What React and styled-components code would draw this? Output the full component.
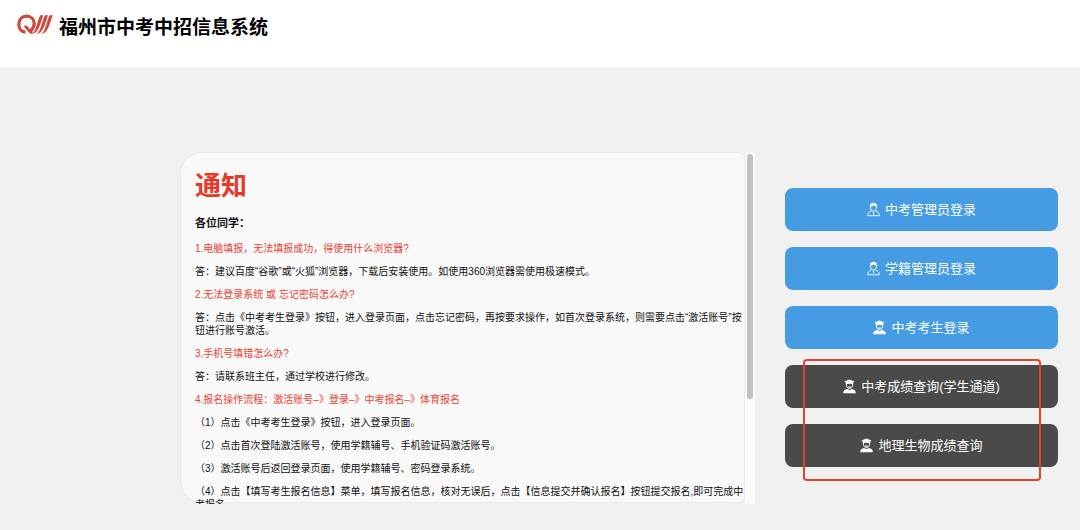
import { useState } from "react";
import styled, { createGlobalStyle, css } from "styled-components";

const GlobalStyle = createGlobalStyle`
  * {
    box-sizing: border-box;
  }

  body {
    margin: 0;
    background-color: #f1f1f1;
    color: #111111;
    font-family: "Liberation Sans", "Noto Sans CJK SC", sans-serif;
  }
`;

const Header = styled.header`
  display: flex;
  align-items: flex-start;
  gap: 6px;
  height: 67px;
  padding: 14px 17px;
  background-color: #ffffff;
`;

const Title = styled.h1`
  margin: 0;
  font-size: 19px;
  line-height: 28px;
  font-weight: 700;
  color: #000000;
`;

const Main = styled.main`
  display: grid;
  grid-template-columns: minmax(0, 1fr) 273px;
  align-items: start;
  gap: 30px;
  padding: 85px 22px 26px 180px;
`;

const Notice = styled.section`
  display: grid;
  grid-template-columns: minmax(0, 1fr) 10px;
  height: 352px;
`;

const Scroller = styled.div`
  height: 352px;
  overflow-y: auto;
  scrollbar-width: none;
`;

const Panel = styled.div`
  height: 351px;
  padding: 16px 0 0 14px;
  border: 1px solid #e9e9e9;
  border-radius: 22px 5px 5px 22px;
  background-color: #f9f9f9;
`;

const Track = styled.div`
  padding: 2px;
  background-color: #fbfbfb;
`;

const Thumb = styled.div`
  height: 245px;
  border-radius: 3px;
  background-color: #c1c1c1;
`;

const NoticeTitle = styled.h2`
  margin: 0 0 12px;
  font-size: 26px;
  line-height: 34px;
  font-weight: 700;
  color: #e83828;
`;

const Greeting = styled.h3`
  margin: 0 0 11px;
  font-size: 11px;
  line-height: 16px;
  font-weight: 700;
`;

const Line = styled.p`
  margin: 0 0 10px;
  font-size: 10px;
  line-height: 13px;
  color: ${(props) => (props.$question ? "#ea4335" : "#111111")};
`;

const Actions = styled.nav`
  display: grid;
  gap: 16px;
  padding-top: 36px;
`;

const ScoreActions = styled.div`
  position: relative;
  display: grid;
  gap: 16px;
`;

const Highlight = styled.div`
  position: absolute;
  inset: -6px 17px -14px 18px;
  border: 2px solid #e0442e;
  border-radius: 4px;
  pointer-events: none;
`;

const variants = {
  login: css`
    background-color: #469ce2;
  `,
  score: css`
    background-color: #4a4a4a;
  `,
};

const Button = styled.button`
  display: flex;
  align-items: center;
  justify-content: center;
  gap: 5px;
  width: 100%;
  height: 43px;
  padding: 0;
  border: none;
  border-radius: 8px;
  color: #ffffff;
  font-family: inherit;
  font-size: 13px;
  line-height: 20px;
  cursor: pointer;
  ${(props) => variants[props.$variant]}
  &:hover {
    opacity: 0.9;
  }
`;

const lines = [
  { question: true, text: "1.电脑填报，无法填报成功，得使用什么浏览器?" },
  {
    text: "答：建议百度“谷歌”或“火狐”浏览器，下载后安装使用。如使用360浏览器需使用极速模式。",
  },
  { question: true, text: "2.无法登录系统 或 忘记密码怎么办?" },
  {
    text: "答：点击《中考考生登录》按钮，进入登录页面，点击忘记密码，再按要求操作，如首次登录系统，则需要点击“激活账号”按钮进行账号激活。",
  },
  { question: true, text: "3.手机号填错怎么办?" },
  { text: "答：请联系班主任，通过学校进行修改。" },
  {
    question: true,
    text: "4.报名操作流程：激活账号–》登录–》中考报名–》体育报名",
  },
  { text: "（1）点击《中考考生登录》按钮，进入登录页面。" },
  { text: "（2）点击首次登陆激活账号，使用学籍辅号、手机验证码激活账号。" },
  { text: "（3）激活账号后返回登录页面，使用学籍辅号、密码登录系统。" },
  {
    text: "（4）点击【填写考生报名信息】菜单，填写报名信息，核对无误后，点击【信息提交并确认报名】按钮提交报名,即可完成中考报名",
  },
];

const Logo = () => (
  <svg width="36" height="21" viewBox="0 0 36 21" aria-hidden="true">
    <g fill="none" stroke="#d04a3b">
      <path
        d="M8.5 18.2C4.2 17.8 1.8 14.5 1.8 10.3C1.8 5.2 5.2 2.2 9.6 2.2C14.2 2.2 17.2 5.3 17.2 9.6C17.2 12.6 15.8 15 13.8 16.6"
        strokeWidth="3.2"
      />
      <path d="M7.5 12.6C11.5 12.8 11 18.4 15.5 18.4" strokeWidth="3" />
    </g>
    <g fill="#d04a3b">
      <path d="M14.5 19.8C19 18.8 20 7 23.2 1.2H26.4C23.6 8 22 19.800 14.500 19.800Z" />
      <path d="M19.200 19.800C23.700 18.800 24.700 7 27.900 1.200H31.100C28.300 8 26.700 19.800 19.200 19.800Z" />
      <path d="M23.900 19.800C28.400 18.800 29.400 7 32.600 1.200H35.800C33 8 31.400 19.800 23.900 19.800Z" />
    </g>
  </svg>
);

const AdminIcon = () => (
  <svg
    width="13"
    height="15"
    viewBox="0 0 14 15"
    fill="none"
    stroke="#ffffff"
    aria-hidden="true"
  >
    <path d="M3.6 4.5C3.6 7.2 5 9.1 7 9.1S10.4 7.2 10.4 4.500C10.400 2.200 9.300 .9 7 .9S3.600 2.200 3.600 4.500Z" />
    <path
      d="M3.400 4.300C5.500 4.300 6.500 3.700 7.500 2.800C8.300 3.700 9.200 4.200 10.600 4.300V2L8.500 .4H5.500L3.400 2Z"
      fill="#ffffff"
      stroke="none"
    />
    <path d="M4.800 8.800L2.800 10.200C1.300 11.200 .7 12.200 .7 14.200H13.300C13.300 12.200 12.700 11.200 11.200 10.200L9.200 8.800M7 10V12.800" />
  </svg>
);

const StudentIcon = () => (
  <svg
    width="13"
    height="15"
    viewBox="0 0 14 15"
    fill="#ffffff"
    aria-hidden="true"
  >
    <path d="M7 0L12.500 2.200L11 3.200V5.500C8.500 4.300 5.500 4.300 3 5.500V3.200L1.500 2.200Z" />
    <path
      d="M3.700 4.500V6.200C3.700 8.400 5.100 9.700 7 9.700S10.300 8.400 10.300 6.200V4.500"
      fill="none"
      stroke="#ffffff"
    />
    <path d="M5 7.200H9V8.200L8 9.300H6L5 8.200Z" opacity="0.6" />
    <path d="M.2 14.800C.2 12.200 1.200 11.200 4.200 10.300L7 11.400L9.800 10.300C12.800 11.200 13.800 12.200 13.800 14.800Z" />
  </svg>
);

const App = () => {
  const [active, setActive] = useState(null);

  const renderButton = (label, Icon, variant) => (
    <Button
      type="button"
      $variant={variant}
      aria-pressed={active === label}
      onClick={() => setActive(label)}
    >
      <Icon />
      {label}
    </Button>
  );

  return (
    <>
      <GlobalStyle />
      <Header>
        <Logo />
        <Title>福州市中考中招信息系统</Title>
      </Header>
      <Main>
        <Notice>
          <Scroller>
            <Panel>
              <NoticeTitle>通知</NoticeTitle>
              <Greeting>各位同学：</Greeting>
              {lines.map(({ text, question }) => (
                <Line key={text} $question={question}>
                  {text}
                </Line>
              ))}
            </Panel>
          </Scroller>
          <Track>
            <Thumb />
          </Track>
        </Notice>
        <Actions>
          {renderButton("中考管理员登录", AdminIcon, "login")}
          {renderButton("学籍管理员登录", AdminIcon, "login")}
          {renderButton("中考考生登录", StudentIcon, "login")}
          <ScoreActions>
            {renderButton("中考成绩查询(学生通道)", StudentIcon, "score")}
            {renderButton("地理生物成绩查询", StudentIcon, "score")}
            <Highlight />
          </ScoreActions>
        </Actions>
      </Main>
    </>
  );
};

export default App;
